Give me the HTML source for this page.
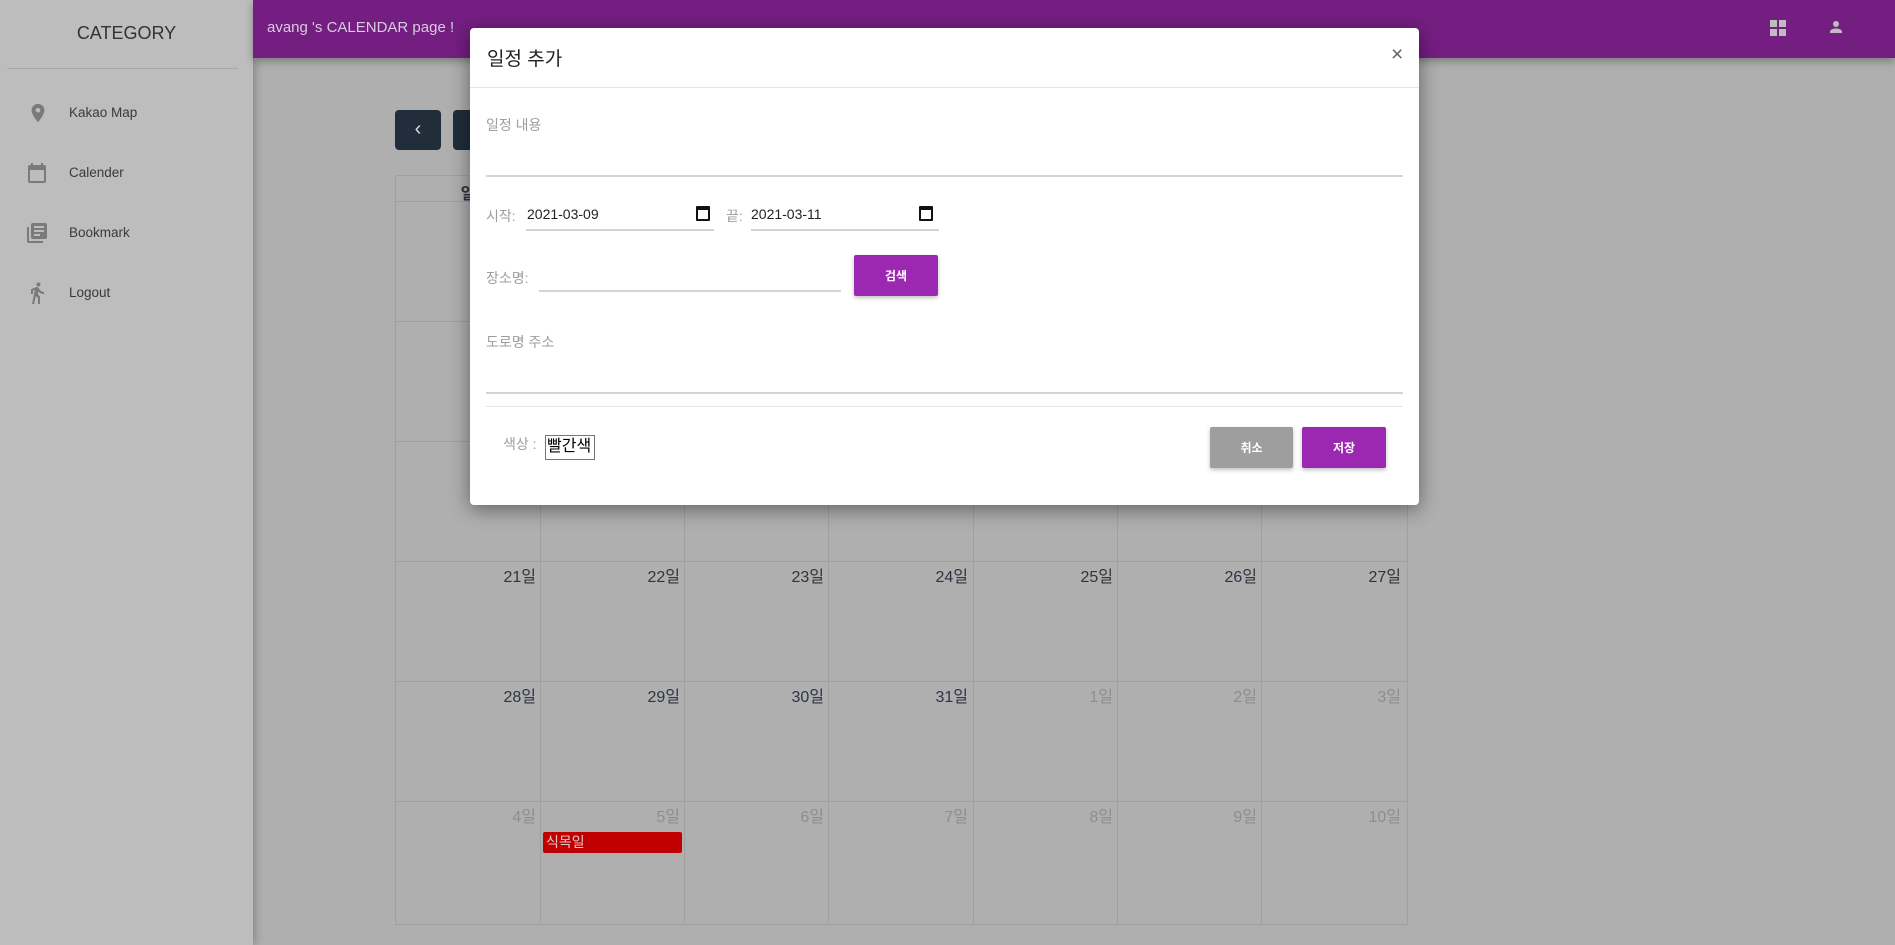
<!DOCTYPE html>
<html><head><meta charset="utf-8"><style>
*{box-sizing:border-box;margin:0;padding:0}
body{width:1895px;height:945px;overflow:hidden;background:#afafaf;font-family:"Liberation Sans","Noto Sans CJK KR",sans-serif;position:relative}
.a{position:absolute}
.side{left:0;top:0;width:253px;height:945px;background:#bdbdbd;box-shadow:2px 0 8px rgba(0,0,0,.25)}
.mi{left:69px;font-size:13.5px;color:#3a3a3a}
.hdr{left:253px;top:0;width:1642px;height:58px;background:#741e82;box-shadow:0 3px 8px rgba(0,0,0,.3)}
.grid{left:395px;top:175px;width:1013px;height:750px;border:1px solid #a0a0a0}
.vl{position:absolute;top:0;width:1px;height:100%;background:#a0a0a0}
.hl{position:absolute;left:0;height:1px;width:100%;background:#a0a0a0}
.d{position:absolute;font-size:16px;color:#2e3440;text-align:right;width:140px}
.g{color:#8e8e8e}
.modal{left:470px;top:28px;width:949px;height:477px;background:#fff;border-radius:4px;box-shadow:0 4px 20px rgba(0,0,0,.45)}
.lbl{color:#9e9e9e;font-size:14px}
.ul{height:2px;background:#d4d4d4}
.btn{color:#fff;font-size:12px;font-weight:bold;display:flex;align-items:center;justify-content:center;border-radius:2px;box-shadow:0 2px 4px rgba(0,0,0,.25)}
.cal{width:14px;height:15px;border:2px solid #111;border-top-width:4px;border-radius:1px}
</style></head><body>
<div class="a side">
 <div class="a" style="left:0;width:253px;top:23px;text-align:center;font-size:18px;color:#333">CATEGORY</div>
 <div class="a" style="left:7px;top:68px;width:231px;height:1px;background:#a8a8a8"></div>
 <svg class="a" style="left:27px;top:101px" width="22" height="24" viewBox="0 0 24 24"><path fill="#7a7a7a" d="M12 2C8.1 2 5 5.1 5 9c0 5.2 7 13 7 13s7-7.8 7-13c0-3.9-3.1-7-7-7zm0 9.5a2.5 2.5 0 110-5 2.5 2.5 0 010 5z"/></svg>
 <svg class="a" style="left:25px;top:161px" width="24" height="24" viewBox="0 0 24 24"><path fill="#7a7a7a" d="M19 4h-1V2h-2v2H8V2H6v2H5a2 2 0 00-2 2v14a2 2 0 002 2h14a2 2 0 002-2V6a2 2 0 00-2-2zm0 16H5V9h14v11z"/></svg>
 <svg class="a" style="left:25px;top:221px" width="24" height="24" viewBox="0 0 24 24"><path fill="#7a7a7a" d="M4 6H2v14a2 2 0 002 2h14v-2H4V6zm16-4H8a2 2 0 00-2 2v12a2 2 0 002 2h12a2 2 0 002-2V4a2 2 0 00-2-2zm-1 9h-10V9h10v2zm-4 4H9v-2h6v2zm4-8H9V5h10v2z"/></svg>
 <svg class="a" style="left:25px;top:281px" width="24" height="24" viewBox="0 0 24 24"><path fill="#7a7a7a" d="M13.5 5.5a2 2 0 100-4 2 2 0 000 4zM9.8 8.9L7 23h2.1l1.8-8 2.1 2v6h2v-7.5l-2.1-2 .6-3C14.8 12 16.8 13 19 13v-2c-1.9 0-3.5-1-4.3-2.4l-1-1.6c-.4-.6-1-1-1.7-1-.3 0-.5.1-.8.1L6 8.3V13h2V9.6l1.8-.7"/></svg>
 <div class="a mi" style="top:105px">Kakao Map</div>
 <div class="a mi" style="top:165px">Calender</div>
 <div class="a mi" style="top:225px">Bookmark</div>
 <div class="a mi" style="top:285px">Logout</div>
</div>
<div class="a hdr">
 <div class="a" style="left:14px;top:19px;font-size:15px;color:#d8cce0">avang 's CALENDAR page !</div>
 <div class="a" style="left:1517px;top:20px;width:16px;height:16px">
  <div class="a" style="left:0;top:0;width:7px;height:16px;background:#bdbdbd"></div>
  <div class="a" style="left:9px;top:0;width:7px;height:7px;background:#bdbdbd"></div>
  <div class="a" style="left:9px;top:9px;width:7px;height:7px;background:#bdbdbd"></div>
  <div class="a" style="left:0;top:7px;width:7px;height:2px;background:#741e82"></div>
 </div>
 <svg class="a" style="left:1574px;top:17px" width="18" height="20" viewBox="0 0 24 24"><path fill="#bdbdbd" d="M12 12a4 4 0 100-8 4 4 0 000 8zm0 2c-2.7 0-8 1.3-8 4v2h16v-2c0-2.7-5.3-4-8-4z"/></svg>
</div>
<div class="a" style="left:395px;top:110px;width:46px;height:40px;background:#212d3b;border-radius:4px;color:#ddd;font-size:20px;text-align:center;line-height:38px">&#8249;</div>
<div class="a" style="left:453px;top:110px;width:46px;height:40px;background:#212d3b;border-radius:4px"></div>
<div class="a grid">
 <div class="vl" style="left:144px"></div><div class="vl" style="left:288px"></div><div class="vl" style="left:432px"></div><div class="vl" style="left:577px"></div><div class="vl" style="left:721px"></div><div class="vl" style="left:865px"></div>
 <div class="hl" style="top:25px"></div><div class="hl" style="top:145px"></div><div class="hl" style="top:265px"></div><div class="hl" style="top:385px"></div><div class="hl" style="top:505px"></div><div class="hl" style="top:625px"></div>
 <div class="d" style="left:0;top:4px;width:144px;text-align:center;font-weight:bold;font-size:16px">일</div>
 <div class="d" style="left:0;top:387px">21일</div><div class="d" style="left:144px;top:387px">22일</div><div class="d" style="left:288px;top:387px">23일</div><div class="d" style="left:432px;top:387px">24일</div><div class="d" style="left:577px;top:387px">25일</div><div class="d" style="left:721px;top:387px">26일</div><div class="d" style="left:865px;top:387px">27일</div>
 <div class="d" style="left:0;top:507px">28일</div><div class="d" style="left:144px;top:507px">29일</div><div class="d" style="left:288px;top:507px">30일</div><div class="d" style="left:432px;top:507px">31일</div><div class="d g" style="left:577px;top:507px">1일</div><div class="d g" style="left:721px;top:507px">2일</div><div class="d g" style="left:865px;top:507px">3일</div>
 <div class="d g" style="left:0;top:627px">4일</div><div class="d g" style="left:144px;top:627px">5일</div><div class="d g" style="left:288px;top:627px">6일</div><div class="d g" style="left:432px;top:627px">7일</div><div class="d g" style="left:577px;top:627px">8일</div><div class="d g" style="left:721px;top:627px">9일</div><div class="d g" style="left:865px;top:627px">10일</div>
 <div class="a" style="left:147px;top:656px;width:139px;height:21px;background:#c00000;border-radius:2px;color:#e0c8c8;font-size:14px;padding-left:3px;line-height:21px">식목일</div>
</div>
<div class="a modal">
 <div class="a" style="left:17px;top:16px;font-size:19px;color:#222">일정 추가</div>
 <div class="a" style="left:921px;top:15px;font-size:21px;color:#666">×</div>
 <div class="a" style="left:0;top:59px;width:949px;height:1px;background:#e5e5e5"></div>
 <div class="a lbl" style="left:16px;top:87px">일정 내용</div>
 <div class="a ul" style="left:16px;top:147px;width:917px"></div>
 <div class="a lbl" style="left:16px;top:178px">시작:</div>
 <div class="a" style="left:57px;top:178px;font-size:14px;color:#222">2021-03-09</div>
 <div class="a cal" style="left:226px;top:178px"></div>
 <div class="a ul" style="left:56px;top:201px;width:188px"></div>
 <div class="a lbl" style="left:256px;top:178px">끝:</div>
 <div class="a" style="left:281px;top:178px;font-size:14px;color:#222">2021-03-11</div>
 <div class="a cal" style="left:449px;top:178px"></div>
 <div class="a ul" style="left:281px;top:201px;width:188px"></div>
 <div class="a lbl" style="left:16px;top:240px">장소명:</div>
 <div class="a ul" style="left:69px;top:262px;width:302px"></div>
 <div class="a btn" style="left:384px;top:227px;width:84px;height:41px;background:#9c27b0">검색</div>
 <div class="a lbl" style="left:16px;top:304px">도로명 주소</div>
 <div class="a ul" style="left:16px;top:364px;width:917px"></div>
 <div class="a" style="left:16px;top:378px;width:917px;height:1px;background:#e5e5e5"></div>
 <div class="a lbl" style="left:33px;top:406px">색상 :</div>
 <div class="a" style="left:75px;top:407px;width:50px;height:25px;border:1px solid #777;font-size:16px;color:#000;line-height:22px;padding-left:1px">빨간색</div>
 <div class="a btn" style="left:740px;top:399px;width:83px;height:41px;background:#9e9e9e">취소</div>
 <div class="a btn" style="left:832px;top:399px;width:84px;height:41px;background:#9c27b0">저장</div>
</div>
</body></html>
